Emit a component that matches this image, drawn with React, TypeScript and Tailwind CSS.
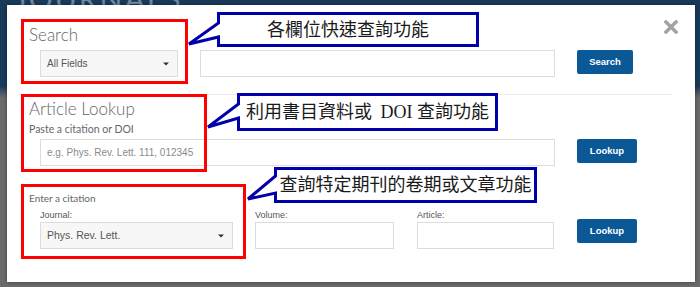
import React from "react";

const lato = { fontFamily: "Lato, 'Open Sans', sans-serif" } as const;
const arial = { fontFamily: "'Liberation Sans', Arial, sans-serif" } as const;
const ming = { fontFamily: "'Liberation Serif', 'Noto Sans CJK TC', serif" } as const;

function Caret() {
  return (
    <svg width="6" height="4" viewBox="0 0 6 4" className="shrink-0">
      <path d="M0 0.5 H6 L3 3.5 Z" fill="#333" />
    </svg>
  );
}

function SelectBox({ label, w, size }: { label: string; w: string; size: string }) {
  return (
    <div
      className={`flex h-[27px] ${w} items-center justify-between border border-[#dcdcdc] bg-[#f7f7f7] pl-[6px] pr-[8px] text-[#555] ${size}`}
      style={arial}
    >
      <span>{label}</span>
      <Caret />
    </div>
  );
}

function Btn({ label }: { label: string }) {
  return (
    <div
      className="flex h-[24px] w-[60px] items-center justify-center rounded-[2px] bg-[#0b5897] text-[9.5px] font-bold text-white"
      style={arial}
    >
      {label}
    </div>
  );
}

export default function App() {
  return (
    <div className="relative h-[287px] w-[700px] overflow-hidden bg-linear-to-b from-[#1a3a5b] from-[30%] to-[#6b6b6b] to-[34%]">
      <span
        className="absolute left-[14px] top-[-24px] text-[30px] tracking-[2px] text-[#6f8aa5]"
        style={lato}
      >
        JOURNALS
      </span>

      <div className="relative z-10 ml-[7px] mt-[5px] h-[277px] w-[688px] bg-white pl-[22px] pr-[17px] pt-[20px] shadow-[0_0_4px_rgba(0,0,0,0.4)]">
        <div className="flex items-start justify-between">
          <h2 className="text-[17px] font-light leading-[20px] text-[#666]" style={lato}>
            Search
          </h2>
          <svg width="14" height="14" viewBox="0 0 14 14" className="mt-[-5px]">
            <path d="M2 2 L12 12 M12 2 L2 12" stroke="#a3a3a3" strokeWidth="3.4" strokeLinecap="square" />
          </svg>
        </div>

        <div className="ml-[11px] mt-[5px] flex items-start">
          <SelectBox label="All Fields" w="w-[138px]" size="text-[10px]" />
          <div className="ml-[22px] h-[27px] w-[355px] border border-[#dcdcdc] bg-white" />
          <div className="ml-[22px]">
            <div
              className="flex h-[24px] w-[56px] items-center justify-center rounded-[2px] bg-[#0b5897] text-[9.5px] font-bold text-white"
              style={arial}
            >
              Search
            </div>
          </div>
        </div>

        <div className="mt-[17px] h-px w-[644px] bg-[#ececec]" />

        <h2 className="mt-[4px] text-[17px] font-light leading-[20px] text-[#666]" style={lato}>
          Article Lookup
        </h2>
        <div className="mt-[3px] text-[10.5px] leading-[14px] text-[#666]" style={lato}>
          Paste a citation or DOI
        </div>
        <div className="ml-[11px] mt-[3px] flex items-start">
          <div
            className="flex h-[27px] w-[515px] items-center border border-[#dcdcdc] bg-white pl-[6px] text-[10px] text-[#8a8a8a]"
            style={arial}
          >
            e.g. Phys. Rev. Lett. 111, 012345
          </div>
          <div className="ml-[22px]">
            <Btn label="Lookup" />
          </div>
        </div>

        <div className="mt-[25px] text-[10px] leading-[14px] text-[#666]" style={lato}>
          Enter a citation
        </div>
        <div className="ml-[11px] mt-[4px] flex items-end">
          <div className="flex flex-col">
            <span className="text-[9px] leading-[12px] text-[#555]" style={arial}>
              Journal:
            </span>
            <div className="mt-[1px]">
              <SelectBox label="Phys. Rev. Lett." w="w-[193px]" size="text-[10.5px]" />
            </div>
          </div>
          <div className="ml-[22px] flex flex-col">
            <span className="text-[9px] leading-[12px] text-[#555]" style={arial}>
              Volume:
            </span>
            <div className="mt-[1px] h-[27px] w-[139px] border border-[#dcdcdc] bg-white" />
          </div>
          <div className="ml-[23px] flex flex-col">
            <span className="text-[9px] leading-[12px] text-[#555]" style={arial}>
              Article:
            </span>
            <div className="mt-[1px] h-[27px] w-[137px] border border-[#dcdcdc] bg-white" />
          </div>
          <div className="mb-[6px] ml-[23px]">
            <Btn label="Lookup" />
          </div>
        </div>
      </div>

      {/* annotation overlay */}
      <svg
        className="pointer-events-none absolute left-0 top-0 z-20"
        width="700"
        height="287"
        viewBox="0 0 700 287"
      >
        <rect x="22.5" y="20.5" width="164" height="62" fill="none" stroke="#ff0000" strokeWidth="3" />
        <rect x="22.5" y="95.5" width="183" height="75" fill="none" stroke="#ff0000" strokeWidth="3" />
        <rect x="22.5" y="185.5" width="222" height="72" fill="none" stroke="#ff0000" strokeWidth="3" />
        <path
          d="M218.5 13.5 H477.5 V45.5 H218.5 V37 L189 44 L218.5 23 Z"
          fill="#fff"
          stroke="#0000aa"
          strokeWidth="3"
        />
        <path
          d="M238.5 94.5 H496.5 V129.5 H238.5 V118 L208 127 L238.5 104 Z"
          fill="#fff"
          stroke="#0000aa"
          strokeWidth="3"
        />
        <path
          d="M275.5 168.5 H535.5 V201.5 H275.5 V193 L248 199 L275.5 176 Z"
          fill="#fff"
          stroke="#0000aa"
          strokeWidth="3"
        />
      </svg>
      <div
        className="absolute left-[217px] top-[12px] z-30 flex h-[35px] w-[262px] items-center justify-center text-[18px] leading-none text-[#1a1a1a]"
        style={ming}
      >
        各欄位快速查詢功能
      </div>
      <div
        className="absolute left-[237px] top-[93px] z-30 flex h-[38px] w-[261px] items-center justify-center text-[18px] leading-none text-[#1a1a1a]"
        style={ming}
      >
        <span className="whitespace-pre">
          利用書目資料或 <span className="ml-[4px]">DOI</span> 查詢功能
        </span>
      </div>
      <div
        className="absolute left-[274px] top-[167px] z-30 flex h-[36px] w-[263px] items-center justify-center text-[18px] leading-none text-[#1a1a1a]"
        style={ming}
      >
        查詢特定期刊的卷期或文章功能
      </div>
    </div>
  );
}
